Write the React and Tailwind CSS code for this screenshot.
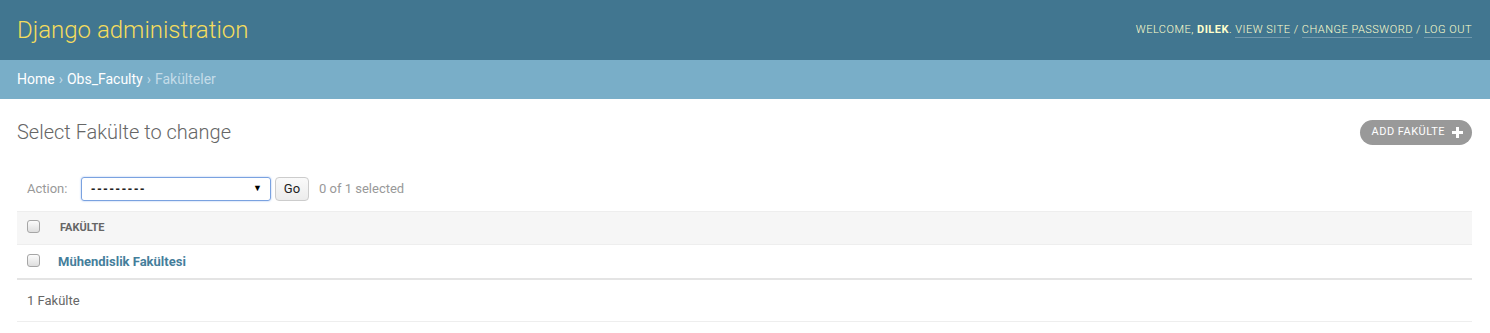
import React from "react";

function Checkbox() {
  return (
    <span className="block w-[13px] h-[13px] rounded-[3px] border border-[#a6a6a6] bg-gradient-to-b from-[#fcfcfc] to-[#dedede]" />
  );
}

export default function App() {
  return (
    <div className="min-h-[333px] bg-white font-['Roboto','Liberation_Sans',sans-serif] text-[13px] text-[#333]">
      {/* header */}
      <div className="h-[60px] bg-[#417690] pl-[17px] pr-[18px] flex items-center justify-between">
        <div className="text-[24px] font-light text-[#f5dd5d] leading-none pb-[1px]">Django administration</div>
        <div className="text-[11px] font-light uppercase tracking-[0.5px] text-[#ffc] leading-[14px] flex items-center">
          <span>
            Welcome, <strong className="font-bold text-[#ffc]">Dilek</strong>.{" "}
            <a className="border-b border-[rgba(255,255,255,0.25)] pb-px">View site</a> /{" "}
            <a className="border-b border-[rgba(255,255,255,0.25)] pb-px">Change password</a> /{" "}
            <a className="border-b border-[rgba(255,255,255,0.25)] pb-px">Log out</a>
          </span>
        </div>
      </div>

      {/* breadcrumbs */}
      <div className="h-[39px] bg-[#79aec8] px-[17px] flex items-center text-[14px] text-[#c4dce8]">
        <a className="text-white">Home</a>
        <span className="mx-[4px]">›</span>
        <a className="text-white">Obs_Faculty</a>
        <span className="mx-[4px]">›</span>
        <span>Fakülteler</span>
      </div>

      {/* content */}
      <div className="pt-[20px] pl-[17px] pr-[18px]">
        <div className="h-[26px] flex items-center justify-between">
          <h1 className="text-[20px] font-light text-[#666] leading-[24px]">Select Fakülte to change</h1>
          <a className="h-[25px] mt-[1px] rounded-[15px] bg-[#999] pl-[12px] pr-[9px] flex items-center gap-[7px] text-[11px] uppercase tracking-[0.5px] text-white">
            Add Fakülte
            <svg width="11" height="11" viewBox="0 0 11 11">
              <path d="M4 0h3v4h4v3H7v4H4V7H0V4h4z" fill="white" />
            </svg>
          </a>
        </div>

        {/* actions */}
        <div className="mt-[22px] p-[10px] flex items-center text-[13px] text-[#999]">
          <label className="w-[54px]">Action:</label>
          <div className="w-[190px] h-[24px] rounded-[3px] border border-[#7aa2e0] shadow-[0_0_2px_#9bbcf0] px-[9px] flex items-center justify-between text-[#222]">
            <span className="font-['Liberation_Sans',sans-serif] font-bold tracking-[1.8px]">---------</span>
            <span className="text-[9px] text-black mr-[-1px]">▼</span>
          </div>
          <button className="ml-[4px] h-[24px] w-[34px] rounded-[4px] border border-[#ccc] bg-gradient-to-b from-[#fafafa] to-[#ececec] text-[13px] text-[#222]">
            Go
          </button>
          <span className="ml-[10px]">0 of 1 selected</span>
        </div>

        {/* table */}
        <div className="border-t border-[#eee]">
          <div className="h-[33px] bg-[#f6f6f6] border-b border-[#eee] flex items-center">
            <div className="w-[43px] pl-[10px] pb-[3px]">
              <Checkbox />
            </div>
            <div className="text-[11px] font-bold uppercase text-[#666]">Fakülte</div>
          </div>
          <div className="h-[33px] flex items-center">
            <div className="w-[41px] pl-[10px] pb-[3px]">
              <Checkbox />
            </div>
            <a className="text-[13px] font-bold text-[#447e9b]">Mühendislik Fakültesi</a>
          </div>
          <div className="h-[2px] bg-[#e4e4e4]" />
          <div className="h-[42px] border-b border-[#eee] px-[10px] flex items-center text-[13px] text-[#666]">
            1 Fakülte
          </div>
        </div>
      </div>
    </div>
  );
}
